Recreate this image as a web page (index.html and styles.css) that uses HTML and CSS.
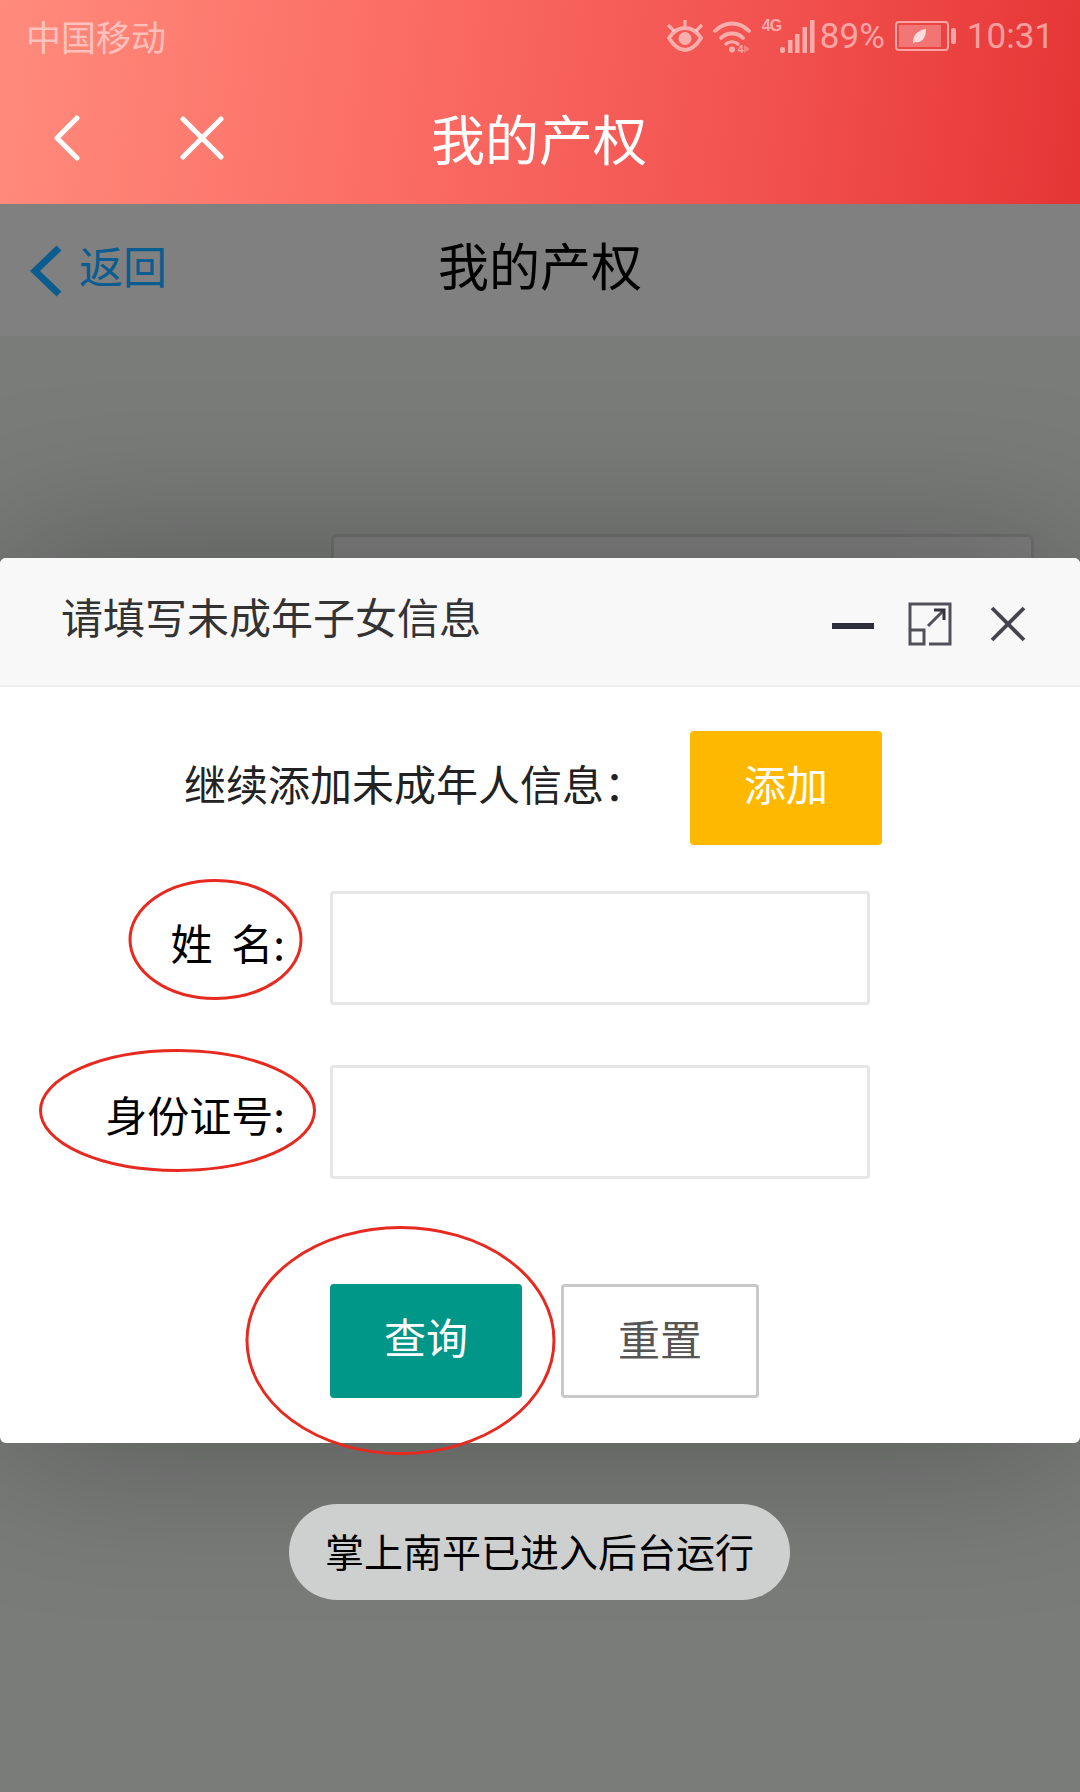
FILE: index.html
```html
<!DOCTYPE html>
<html lang="zh-CN">
<head>
    <meta charset="utf-8" />
    <title>我的产权</title>
    <link rel="stylesheet" href="styles.css">
</head>
<body>
    <main class="screen">
        <header class="app-head">
            <div class="status-bar">
                <span class="carrier">中国移动</span>
                <div class="status-icons">
                    <svg class="ico-eye" width="36" height="32" viewBox="0 0 36 32" fill="none" stroke="currentColor">
                        <path d="M2 18C7 10 12 8 18 8s11 2 16 10c-5 8-10 12-16 12S7 26 2 18z" stroke-width="3.800"/>
                        <circle cx="18" cy="18.500" r="6.500" fill="currentColor" stroke="none"/>
                        <path d="M1 5l6 6M35 5l-6 6M18 0v6" stroke-width="3.200"/>
                    </svg>
                    <svg class="ico-wifi" width="38" height="36" viewBox="0 0 38 36" fill="none" stroke="currentColor" stroke-width="3.800" stroke-linecap="round">
                        <path d="M2 11C12 1 26 1 36 11"/>
                        <path d="M8 18c6-6 16-6 22 0"/>
                        <path d="M13 24c3-3 9-3 12 0" stroke-width="3.200"/>
                        <circle cx="19" cy="29.500" r="3" fill="currentColor" stroke="none"/>
                        <text class="wifi-mark" x="24.500" y="33">4</text>
                        <path d="M31 25l6 4-6 4z" fill="currentColor" stroke="none" opacity=".5"/>
                    </svg>
                    <span class="net-label">4G</span>
                    <svg class="ico-signal" width="35" height="33" viewBox="0 0 35 33" fill="currentColor">
                        <rect x="0" y="27" width="5" height="6" rx="2"/>
                        <rect x="8" y="20" width="4.500" height="13"/>
                        <rect x="15" y="14" width="4.500" height="19"/>
                        <rect x="22.500" y="7" width="4.500" height="26"/>
                        <rect x="30" y="0" width="4.500" height="33"/>
                    </svg>
                    <span class="battery-pct">89%</span>
                    <svg class="ico-battery" width="62" height="30" viewBox="0 0 62 30" fill="none">
                        <rect x="1" y="1" width="52" height="28" rx="3" stroke="currentColor" stroke-width="2"/>
                        <rect x="4" y="4" width="42" height="22" fill="currentColor" opacity=".5"/>
                        <path d="M18 21c0-7 5-12 13-13 0 9-4 14-11 13l-2 2z" fill="#fff" opacity=".75"/>
                        <rect x="56" y="7" width="5" height="16" rx="2" fill="currentColor"/>
                    </svg>
                    <span class="clock">10:31</span>
                </div>
            </div>
            <nav class="title-bar">
                <svg class="nav-back" width="26" height="46" viewBox="0 0 26 46" fill="none" stroke="#fff" stroke-width="5" stroke-linecap="round" stroke-linejoin="round">
                    <path d="M23 3L3 23l20 20"/>
                </svg>
                <svg class="nav-close" width="44" height="44" viewBox="0 0 44 44" fill="none" stroke="#fff" stroke-width="5" stroke-linecap="round">
                    <path d="M3 3l38 38M41 3L3 41"/>
                </svg>
                <h1>我的产权</h1>
            </nav>
        </header>

        <section class="sub-head">
            <a class="back-link">
                <svg width="32" height="52" viewBox="0 0 32 52" fill="none" stroke="#0b5c8f" stroke-width="7">
                    <path d="M29 3L5 26l24 23"/>
                </svg>
                <span>返回</span>
            </a>
            <h2>我的产权</h2>
        </section>

        <section class="page-body">
            <div class="form-card"></div>
        </section>

        <section class="dialog">
            <div class="dialog-head">
                <span class="dialog-title">请填写未成年子女信息</span>
                <div class="dialog-tools">
                    <span class="tool-min"></span>
                    <svg class="tool-expand" width="44" height="44" viewBox="0 0 44 44" fill="none" stroke="#50505b" stroke-width="3">
                        <path d="M2 27V2h40v40H21"/>
                        <rect x="2" y="28" width="14" height="14"/>
                        <path d="M20 24L36 8"/>
                        <path d="M26 8h10v10" stroke="#33333f"/>
                    </svg>
                    <svg class="tool-close" width="36" height="36" viewBox="0 0 36 36" fill="none" stroke="#44444f" stroke-width="3.800">
                        <path d="M2 2l32 32M34 2L2 34"/>
                    </svg>
                </div>
            </div>
            <div class="dialog-body">
                <div class="add-row">
                    <span class="add-text">继续添加未成年人信息：</span>
                    <button class="btn btn-yellow">添加</button>
                </div>
                <div class="field field-name">
                    <label>姓&nbsp;&nbsp;名:</label>
                    <input class="field-input" type="text" />
                </div>
                <div class="field field-id">
                    <label>身份证号:</label>
                    <input class="field-input" type="text" />
                </div>
                <div class="actions">
                    <button class="btn btn-teal">查询</button>
                    <button class="btn btn-plain">重置</button>
                </div>
            </div>
        </section>

        <div class="toast">掌上南平已进入后台运行</div>

        <svg class="marks" width="1080" height="1792" viewBox="0 0 1080 1792" fill="none" stroke="#e62a20" stroke-width="3">
            <ellipse cx="215.500" cy="939.500" rx="85.500" ry="59"/>
            <ellipse cx="177.500" cy="1110.500" rx="137" ry="60"/>
            <ellipse cx="400.500" cy="1340.500" rx="153.500" ry="113"/>
        </svg>
    </main>
</body>
</html>
```

FILE: styles.css
```css
* {
    box-sizing: border-box;
    font-family: "Noto Sans CJK SC", "Liberation Sans", sans-serif;
}

html, body {
    margin: 0;
    padding: 0;
}

.screen {
    position: relative;
    width: 1080px;
    height: 1792px;
    overflow: hidden;
    display: flex;
    flex-direction: column;
    background: #7a7c7a;
}

/* top red bar */
.app-head {
    height: 204px;
    background: linear-gradient(97deg, #ff8b7c 0%, #fb6e66 35%, #f2524f 70%, #e53535 100%);
    color: #fff;
}

.status-bar {
    height: 72px;
    padding: 0 26px 0 26px;
    display: flex;
    align-items: center;
    justify-content: space-between;
    color: rgba(255, 255, 255, 0.52);
}

.carrier {
    font-size: 35px;
    line-height: 72px;
}

.status-icons {
    display: flex;
    align-items: center;
}

.status-icons svg {
    display: block;
}

.ico-wifi {
    margin: 3px 0 0 10px;
}

.wifi-mark {
    font-family: "Liberation Sans", sans-serif;
    font-size: 11px;
    font-weight: bold;
    fill: currentColor;
    stroke: none;
}

.net-label {
    margin: -20px 0 0 11px;
    width: 18px;
    font-family: "Liberation Sans", sans-serif;
    font-weight: bold;
    font-size: 16px;
    letter-spacing: -1px;
    white-space: nowrap;
}

.battery-pct,
.clock {
    font-family: Roboto, sans-serif;
    font-size: 35px;
}

.battery-pct {
    margin: 0 10px 0 5px;
}

.clock {
    margin-left: 10px;
}

.title-bar {
    height: 132px;
    display: flex;
    align-items: center;
    padding: 0 0 1px 54px;
}

.nav-close {
    margin-left: 100px;
}

.title-bar h1 {
    margin: 0 0 0 207px;
    font-size: 54px;
    font-weight: normal;
    line-height: 60px;
}

/* page behind the overlay */
.sub-head {
    height: 132px;
    background: #808080;
    display: flex;
    align-items: center;
    padding: 0 0 10px 30px;
}

.back-link {
    display: flex;
    align-items: center;
    gap: 17px;
    color: #0b5c8f;
    font-size: 44px;
}

.back-link svg {
    margin-top: 12px;
}

.sub-head h2 {
    margin: 0 0 3px 271px;
    font-size: 51px;
    font-weight: normal;
    color: #000;
}

.page-body {
    flex: 1;
    padding: 198px 46px 0 331px;
}

.form-card {
    height: 200px;
    border: 3px solid #707170;
    border-radius: 6px;
    background: #808080;
}

/* popup */
.dialog {
    position: absolute;
    left: 0;
    right: 0;
    top: 558px;
    height: 885px;
    background: #fff;
    border-radius: 6px;
    box-shadow: 0 0 170px rgba(0, 0, 0, 0.3);
}

.dialog-head {
    height: 129px;
    padding: 0 54px 0 61px;
    display: flex;
    align-items: center;
    justify-content: space-between;
    background: #f8f8f8;
    border-bottom: 2px solid #eee;
    border-radius: 6px 6px 0 0;
}

.dialog-title {
    font-size: 42px;
    color: #333;
    margin-top: -12px;
}

.dialog-tools {
    display: flex;
    align-items: center;
    gap: 36px;
}

.tool-min {
    width: 42px;
    height: 6px;
    margin-top: 8px;
    background: #2e2d3c;
}

.tool-expand {
    margin: 4px 2px 0 -2px;
}

.tool-close {
    margin-top: 4px;
}

.dialog-body {
    padding-top: 44px;
}

.add-row {
    display: flex;
    align-items: center;
    padding-left: 184px;
}

.add-text {
    width: 506px;
    font-size: 42px;
    color: #222;
    margin-top: -12px;
}

.btn {
    display: block;
    height: 114px;
    padding: 0 0 12px;
    border: 0;
    border-radius: 4px;
    font-size: 42px;
    color: #fff;
}

.btn-yellow {
    width: 192px;
    background: #ffb800;
}

.field {
    display: flex;
    align-items: center;
    margin-top: 46px;
}

.field-id {
    margin-top: 60px;
}

.field label {
    width: 285px;
    padding-bottom: 14px;
    text-align: right;
    font-size: 42px;
    color: #000;
}

.field-id label {
    padding-bottom: 18px;
}

.field-input {
    display: block;
    width: 540px;
    height: 114px;
    margin-left: 45px;
    background: #fff;
    border: 3px solid #e6e6e6;
    border-radius: 4px;
}

.actions {
    display: flex;
    gap: 39px;
    margin-top: 105px;
    padding-left: 330px;
}

.btn-teal {
    width: 192px;
    background: #009688;
}

.btn-plain {
    width: 198px;
    padding-bottom: 8px;
    background: #fff;
    border: 3px solid #c9c9c9;
    color: #555;
}

.toast {
    position: absolute;
    left: 289px;
    top: 1504px;
    width: 501px;
    height: 96px;
    padding-bottom: 4px;
    border-radius: 48px;
    background: #cecfcf;
    color: #000;
    font-size: 39px;
    line-height: 92px;
    text-align: center;
}

/* hand drawn red rings */
.marks {
    position: absolute;
    left: 0;
    top: 0;
    pointer-events: none;
}
```
